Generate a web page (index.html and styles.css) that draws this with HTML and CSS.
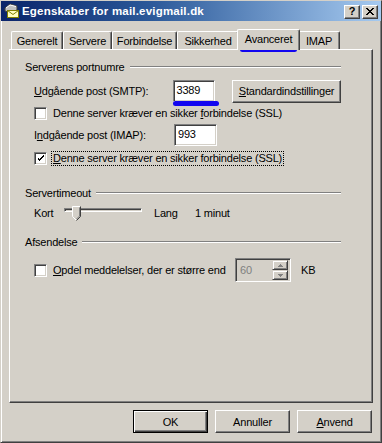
FILE: index.html
```html
<!DOCTYPE html>
<html lang="da">
<head>
    <meta charset="UTF-8">
    <title>Egenskaber for mail.evigmail.dk</title>
    <link rel="stylesheet" href="styles.css">
</head>
<body>
    <div class="window">
        <div class="titlebar">
            <svg class="app-icon" width="16" height="16" viewBox="0 0 16 16">
                <path d="M1 5 L6 1 L13 3 L13 7 L7 10 L1 8 Z" fill="#c0c0c0" stroke="#404040" stroke-width="1"/>
                <path d="M2 5 L6 2 L12 3.5" fill="none" stroke="#ffffff" stroke-width="1"/>
                <rect x="3.5" y="7.5" width="11" height="7" fill="#ffffc0" stroke="#808000"/>
                <path d="M3.5 7.5 L9 11.5 L14.5 7.5" fill="none" stroke="#808000"/>
            </svg>
            <span class="title">Egenskaber for mail.evigmail.dk</span>
            <div class="title-buttons">
                <span class="tbtn tbtn-help">?</span>
                <span class="tbtn">
                    <svg width="8" height="7" viewBox="0 0 8 7">
                        <path d="M0 0 L7 7 M1 0 L8 7 M7 0 L0 7 M8 0 L1 7" stroke="#000" stroke-width="1"/>
                    </svg>
                </span>
            </div>
        </div>

        <div class="content">
            <div class="tabs">
                <div class="tab tab-generelt">Generelt</div>
                <div class="tab tab-servere">Servere</div>
                <div class="tab tab-forbindelse">Forbindelse</div>
                <div class="tab tab-sikkerhed">Sikkerhed</div>
                <div class="tab tab-avanceret active">Avanceret</div>
                <div class="tab tab-imap">IMAP</div>
            </div>

            <div class="panel">
                <div class="group-label g1"><span>Serverens portnumre</span><i class="etch"></i></div>

                <div class="field-row smtp-row">
                    <span class="field-label"><u>U</u>dgående post (SMTP):</span>
                    <span class="textbox">3389</span>
                    <span class="btn btn-default-settings"><u>S</u>tandardindstillinger</span>
                </div>

                <div class="check-row cb1">
                    <span class="checkbox"></span>
                    <span class="check-text">Denne server kræver en sikker <u>f</u>orbindelse (SSL)</span>
                </div>

                <div class="field-row imap-row">
                    <span class="field-label">I<u>n</u>dgående post (IMAP):</span>
                    <span class="textbox">993</span>
                </div>

                <div class="check-row cb2">
                    <span class="checkbox">
                        <svg width="7" height="7" viewBox="0 0 7 7">
                            <path d="M0 2h1v3h1v1h1v-1h1v-1h1v-1h1v-1h1v-2h-1v1h-1v1h-1v1h-1v1h-1v-1h-1v-1z" fill="#000"/>
                        </svg>
                    </span>
                    <span class="check-text focus"><u>D</u>enne server kræver en sikker forbindelse (SSL)</span>
                </div>

                <div class="group-label g2"><span>Servertimeout</span><i class="etch"></i></div>

                <div class="slider-row">
                    <span class="slider-label">Kort</span>
                    <span class="slider">
                        <span class="track"></span>
                        <svg class="thumb" width="9" height="15" viewBox="0 0 9 15">
                            <path d="M0.5 14 V0.5 H8.5 V10.5 L4.5 14.5 L0.5 10.5 Z" fill="#d4d0c8"/>
                            <path d="M0.5 10.5 V0.5 H8" fill="none" stroke="#fff"/>
                            <path d="M8.5 0.5 V10.5 L4.5 14.5" fill="none" stroke="#404040"/>
                            <path d="M7.5 1.5 V10 L4.5 13" fill="none" stroke="#808080"/>
                            <path d="M0.5 10.5 L4 14" fill="none" stroke="#fff"/>
                        </svg>
                    </span>
                    <span class="slider-lang">Lang</span>
                    <span class="slider-value">1 minut</span>
                </div>

                <div class="group-label g3"><span>Afsendelse</span><i class="etch"></i></div>

                <div class="check-row cb3">
                    <span class="checkbox"></span>
                    <span class="check-text split-text"><u>O</u>pdel meddelelser, der er større end</span>
                    <span class="spinbox">
                        <span class="spin-value">60</span>
                        <span class="spin-buttons">
                            <span class="spin-btn">
                                <svg width="5" height="3" viewBox="0 0 5 3"><path d="M2 0h1v1h1v1h1v1h-5v-1h1v-1h1z" fill="#808080"/></svg>
                            </span>
                            <span class="spin-btn">
                                <svg width="5" height="3" viewBox="0 0 5 3"><path d="M0 0h5v1h-1v1h-1v1h-1v-1h-1v-1h-1z" fill="#808080"/></svg>
                            </span>
                        </span>
                    </span>
                    <span class="unit">KB</span>
                </div>
            </div>

            <div class="actions">
                <span class="btn btn-action btn-default">OK</span>
                <span class="btn btn-action">Annuller</span>
                <span class="btn btn-action"><u>A</u>nvend</span>
            </div>
        </div>

        <!-- blue marker strokes drawn over the screenshot -->
        <span class="marker marker-tab"></span>
        <span class="marker marker-port"></span>
    </div>
</body>
</html>
```

FILE: styles.css
```css
:root {
    --face: #d4d0c8;
    --light: #ffffff;
    --shadow: #808080;
    --dark: #404040;
    --marker: #1206f0;
}

* {
    margin: 0;
    padding: 0;
    box-sizing: border-box;
}

body {
    width: 382px;
    height: 443px;
    overflow: hidden;
    background: var(--face);
    font-family: "Liberation Sans", Arial, sans-serif;
    font-size: 11px;
    letter-spacing: -0.2px;
    color: #000;
}

u {
    text-decoration: underline;
    text-underline-offset: 1px;
}

.window {
    position: relative;
    width: 382px;
    height: 443px;
    background: var(--face);
    border: 1px solid;
    border-color: var(--face) var(--dark) var(--dark) var(--face);
    box-shadow: inset 1px 1px var(--light), inset -1px -1px var(--shadow);
    display: flex;
    flex-direction: column;
}

/* title bar */
.titlebar {
    height: 20px;
    display: flex;
    align-items: center;
    padding: 0 3px 0 3px;
    background: linear-gradient(to right, #0a246a 0%, #2c5a9a 40%, #a6caf0 100%);
}

.app-icon {
    flex: none;
    margin-right: 2px;
}

.title {
    color: #fff;
    font-weight: bold;
    font-size: 11.5px;
    letter-spacing: 0.2px;
    flex: 1;
    white-space: nowrap;
}

.title-buttons {
    display: flex;
    gap: 2px;
    margin-top: 1px;
}

.tbtn {
    width: 16px;
    height: 14px;
    display: flex;
    align-items: center;
    justify-content: center;
    background: var(--face);
    border: 1px solid;
    border-color: var(--light) var(--dark) var(--dark) var(--light);
    box-shadow: inset -1px -1px var(--shadow);
}

.tbtn-help {
    font-weight: bold;
    font-size: 11px;
    line-height: 1;
}

/* dialog content */
.content {
    padding: 8px 8px 0 8px;
    display: flex;
    flex-direction: column;
}

.tabs {
    height: 20px;
    display: flex;
    align-items: flex-end;
    padding-left: 2px;
}

.tab {
    height: 18px;
    display: flex;
    align-items: center;
    justify-content: center;
    padding-top: 1px;
    background: var(--face);
    border-top: 1px solid var(--light);
    border-left: 1px solid var(--light);
    border-right: 1px solid var(--dark);
    border-radius: 2px 2px 0 0;
    box-shadow: inset -1px 0 var(--shadow);
    white-space: nowrap;
}

.tab-generelt { width: 52px; }
.tab-servere { width: 49px; }
.tab-forbindelse { width: 65px; }
.tab-sikkerhed { width: 62px; }
.tab-avanceret { width: 59px; }
.tab-imap { width: 42px; }

.tab.active {
    position: relative;
    z-index: 1;
    width: 63px;
    height: 21px;
    margin: 0 -2px -1px -2px;
    padding-bottom: 3px;
}

.panel {
    width: 364px;
    height: 354px;
    border: 1px solid;
    border-color: var(--light) var(--dark) var(--dark) var(--light);
    box-shadow: inset -1px -1px var(--shadow);
    padding: 0 31px 0 15px;
    display: flex;
    flex-direction: column;
}

.group-label {
    height: 14px;
    display: flex;
    align-items: center;
    gap: 5px;
}

.etch {
    flex: 1;
    height: 2px;
    border-top: 1px solid var(--shadow);
    border-bottom: 1px solid var(--light);
}

.g1 { margin-top: 10px; }
.g2 { margin-top: 20px; }
.g3 { margin-top: 12px; }

.field-row {
    height: 23px;
    display: flex;
    align-items: center;
    padding-left: 9px;
}

.smtp-row { margin-top: 5px; }
.imap-row { margin-top: 3px; }

.field-label {
    width: 140px;
}

.textbox {
    width: 43px;
    height: 22px;
    background: #fff;
    border: 1px solid;
    border-color: var(--shadow) var(--light) var(--light) var(--shadow);
    box-shadow: inset 1px 1px var(--dark), inset -1px -1px var(--face);
    padding: 3px 0 0 3px;
}

.btn {
    height: 23px;
    display: flex;
    align-items: center;
    justify-content: center;
    background: var(--face);
    border: 1px solid;
    border-color: var(--light) var(--dark) var(--dark) var(--light);
    box-shadow: inset -1px -1px var(--shadow);
}

.btn-default-settings {
    width: 110px;
    margin-left: 17px;
    margin-top: 1px;
}

.check-row {
    display: flex;
    align-items: center;
    padding-left: 9px;
}

.cb1 { margin-top: 4px; height: 14px; }
.cb2 { margin-top: 5px; height: 15px; }
.cb3 { margin-top: 8px; height: 26px; }

.checkbox {
    width: 13px;
    height: 13px;
    flex: none;
    display: flex;
    align-items: center;
    justify-content: center;
    background: #fff;
    border: 1px solid;
    border-color: var(--shadow) var(--light) var(--light) var(--shadow);
    box-shadow: inset 1px 1px var(--dark), inset -1px -1px var(--face);
}

.check-text {
    margin-left: 6px;
    white-space: nowrap;
}

.check-text.focus {
    margin-left: 5px;
    padding: 0 1px;
    outline: 1px dotted #000;
    outline-offset: 0;
    line-height: 13px;
}

.split-text {
    width: 182px;
}

/* slider */
.slider-row {
    margin-top: 3px;
    height: 20px;
    display: flex;
    align-items: center;
    padding-left: 9px;
}

.slider-label {
    width: 30px;
}

.slider {
    position: relative;
    width: 78px;
    height: 20px;
    display: flex;
    align-items: center;
}

.track {
    width: 100%;
    height: 4px;
    margin-top: -6px;
    border: 1px solid;
    border-color: var(--shadow) var(--light) var(--light) var(--shadow);
    box-shadow: inset 1px 1px var(--dark);
}

.thumb {
    position: absolute;
    left: 8px;
    top: 3px;
}

.slider-lang {
    margin-left: 12px;
    width: 41px;
}

/* spin box */
.spinbox {
    width: 56px;
    height: 24px;
    display: flex;
    align-items: center;
    background: var(--face);
    border: 1px solid;
    border-color: var(--shadow) var(--light) var(--light) var(--shadow);
    box-shadow: inset 1px 1px var(--dark), inset -1px -1px var(--face);
    padding: 2px 2px 2px 4px;
}

.spin-value {
    flex: 1;
    color: var(--shadow);
}

.spin-buttons {
    width: 16px;
    height: 20px;
    display: flex;
    flex-direction: column;
}

.spin-btn {
    flex: 1;
    display: flex;
    align-items: center;
    justify-content: center;
    background: var(--face);
    border: 1px solid;
    border-color: var(--face) var(--dark) var(--dark) var(--face);
    box-shadow: inset 1px 1px var(--light), inset -1px -1px var(--shadow);
}

.unit {
    margin-left: 10px;
}

/* bottom buttons */
.actions {
    margin-top: 7px;
    display: flex;
    justify-content: flex-end;
    gap: 7px;
    padding-right: 1px;
}

.btn-action {
    width: 75px;
}

.btn-default {
    border-color: #000;
    box-shadow: inset 1px 1px var(--light), inset -1px -1px var(--dark), inset -2px -2px var(--shadow);
}

/* marker strokes */
.marker {
    position: absolute;
    background: var(--marker);
    border-radius: 3px;
}

.marker-tab {
    left: 239px;
    top: 46px;
    width: 57px;
    height: 5px;
}

.marker-port {
    left: 172px;
    top: 100px;
    width: 46px;
    height: 5px;
}
```
